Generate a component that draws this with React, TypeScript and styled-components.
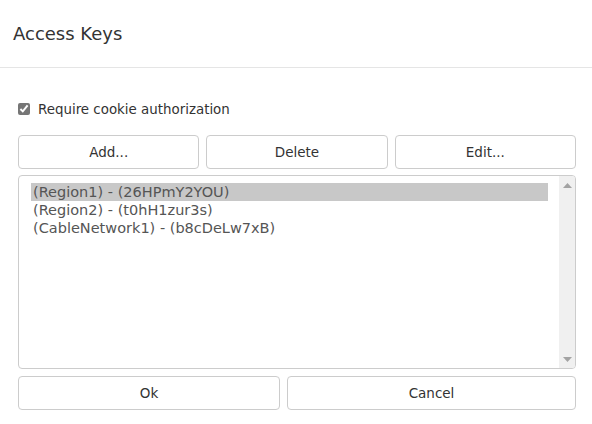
import React from 'react';
import styled, { createGlobalStyle } from 'styled-components';

const GlobalStyle = createGlobalStyle`
  html, body {
    margin: 0;
    padding: 0;
    background: #ffffff;
  }
  body {
    font-family: "DejaVu Sans", "Liberation Sans", sans-serif;
    color: #333333;
  }
`;

const keys = [
  { name: 'Region1', code: '26HPmY2YOU' },
  { name: 'Region2', code: 't0hH1zur3s' },
  { name: 'CableNetwork1', code: 'b8cDeLw7xB' }
];

export default function App() {
  return (
    <Dialog>
      <GlobalStyle />
      <Header>
        <Title>Access Keys</Title>
      </Header>
      <Body>
        <CheckRow>
          <Check checked readOnly type="checkbox" />
          <CheckLabel>Require cookie authorization</CheckLabel>
        </CheckRow>
        <ButtonRow $cols={3}>
          <Button>Add...</Button>
          <Button>Delete</Button>
          <Button>Edit...</Button>
        </ButtonRow>
        <ListBox>
          <ListItems>
            {keys.map((key, index) => (
              <ListItem key={key.name} $selected={index === 0}>
                ({key.name}) - ({key.code})
              </ListItem>
            ))}
          </ListItems>
          <ScrollBar>
            <ScrollArrow viewBox="0 0 9 5">
              <path d="M0 5 L4.5 0 L9 5 Z" />
            </ScrollArrow>
            <ScrollArrow viewBox="0 0 9 5">
              <path d="M0 0 L4.5 5 L9 0 Z" />
            </ScrollArrow>
          </ScrollBar>
        </ListBox>
        <ButtonRow $cols={2} $footer>
          <Button>Ok</Button>
          <Button>Cancel</Button>
        </ButtonRow>
      </Body>
    </Dialog>
  );
}

const Dialog = styled.div`
  width: 592px;
  height: 424px;
  background: #ffffff;
  display: flex;
  flex-direction: column;
`;

const Header = styled.header`
  height: 68px;
  box-sizing: border-box;
  border-bottom: 1px solid #e5e5e5;
  display: flex;
  align-items: center;
  padding: 0 13px 0;
`;

const Title = styled.h1`
  margin: 0;
  font-size: 18px;
  font-weight: 400;
  color: #333333;
`;

const Body = styled.div`
  display: flex;
  flex-direction: column;
  padding: 34px 16px 0 18px;
`;

const CheckRow = styled.label`
  display: flex;
  align-items: center;
  gap: 8px;
  height: 14px;
`;

const Check = styled.input`
  margin: 0;
  width: 12px;
  height: 12px;
  accent-color: #767676;
`;

const CheckLabel = styled.span`
  font-size: 13.4px;
  color: #333333;
`;

const ButtonRow = styled.div`
  display: grid;
  grid-template-columns: ${({ $cols }) =>
    $cols === 2 ? '262px 1fr' : 'repeat(3, 1fr)'};
  gap: 7px;
  margin-top: ${({ $footer }) => ($footer ? '7px' : '19px')};
`;

const Button = styled.button`
  height: 34px;
  border: 1px solid #cccccc;
  border-radius: 4px;
  background: #ffffff;
  font-family: "DejaVu Sans", "Liberation Sans", sans-serif;
  font-size: 13.5px;
  color: #333333;
  padding: 0;
`;

const ListBox = styled.div`
  margin-top: 6px;
  height: 194px;
  box-sizing: border-box;
  border: 1px solid #cccccc;
  border-radius: 4px;
  display: flex;
  overflow: hidden;
`;

const ListItems = styled.ul`
  flex: 1;
  list-style: none;
  margin: 0;
  padding: 7px 11px 0 12px;
`;

const ListItem = styled.li`
  height: 18px;
  line-height: 18px;
  padding-left: 2px;
  font-size: 14.5px;
  color: #555555;
  background: ${({ $selected }) => ($selected ? '#c8c8c8' : 'transparent')};
`;

const ScrollBar = styled.div`
  width: 16px;
  background: #f0f0f0;
  display: flex;
  flex-direction: column;
  justify-content: space-between;
  align-items: center;
  padding: 7px 0 6px;
`;

const ScrollArrow = styled.svg`
  width: 9px;
  height: 5px;
  fill: #a3a3a3;
`;
